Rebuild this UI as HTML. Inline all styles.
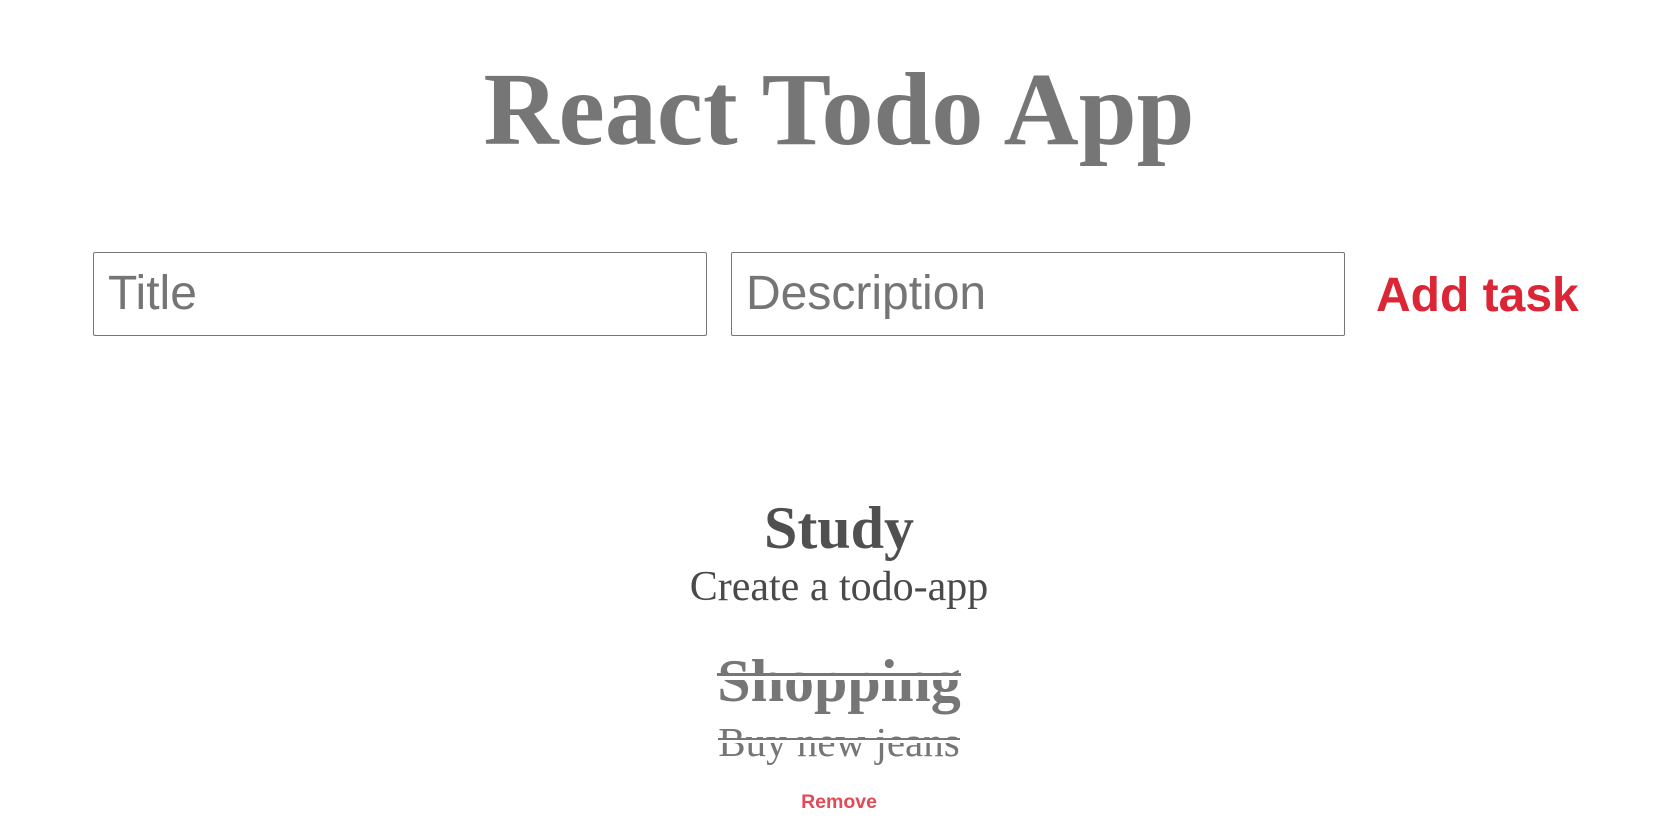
<!DOCTYPE html>
<html><head><meta charset="utf-8"><style>
html,body{margin:0;padding:0;background:#fff;width:1678px;height:818px;overflow:hidden;position:relative}
.t{position:absolute;left:0;width:1678px;text-align:center;line-height:1;white-space:nowrap}
.serif{font-family:"Liberation Serif",serif}
.box{position:absolute;top:252px;height:84px;box-sizing:border-box;border:1px solid #767676;border-radius:2px;background:#fff}
.ph{position:absolute;left:14px;top:0;font:48px/82px "Liberation Sans",sans-serif;color:#757575}
.s{position:relative;display:inline-block}
.s::after{content:"";position:absolute;left:0;right:0;}
.s1::after{top:22px;height:3px;border-bottom:4px solid #fff;background:#767676}
.s2::after{top:16px;height:2px;border-bottom:3px solid #fff;background:#767676}
</style></head><body>
<div class="t serif" style="top:58px;font-size:104px;font-weight:bold;color:#767676">React Todo App</div>
<div class="box" style="left:93px;width:614px"><span class="ph">Title</span></div>
<div class="box" style="left:731px;width:614px"><span class="ph">Description</span></div>
<div style="position:absolute;left:1376px;top:272px;font:bold 48px/1 'Liberation Sans',sans-serif;color:#dc2535;white-space:nowrap">Add task</div>
<div class="t serif" style="top:498px;font-size:60px;font-weight:bold;color:#505050">Study</div>
<div class="t serif" style="top:566px;font-size:42px;color:#4a4a4a">Create a todo-app</div>
<div class="t serif" style="top:651px;font-size:60px;font-weight:bold;color:#767676"><span class="s s1">Shopping</span></div>
<div class="t serif" style="top:722px;font-size:41px;color:#767676"><span class="s s2">Buy new jeans</span></div>
<div class="t" style="top:793px;font:bold 19.5px/1 'Liberation Sans',sans-serif;color:#e24a56">Remove</div>
</body></html>
